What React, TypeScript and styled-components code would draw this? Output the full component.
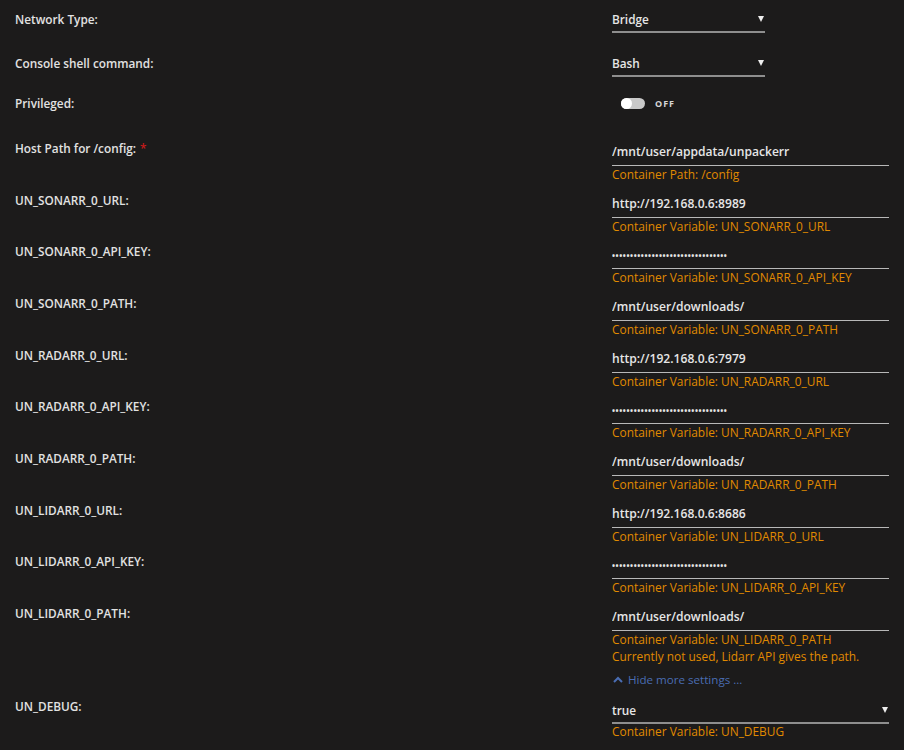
import React from "react";
import styled, { createGlobalStyle } from "styled-components";

const Global = createGlobalStyle`
  html, body {
    margin: 0;
    padding: 0;
    background: #1c1b1b;
  }
  body {
    font-family: "Open Sans", "Noto Sans", sans-serif;
    font-size: 11px;
    color: #e4e4e4;
  }
`;

const Form = styled.div`
  width: 904px;
  height: 750px;
  box-sizing: border-box;
  padding: 6px 15px 0 15px;
  background: #1c1b1b;
  overflow: hidden;
`;

const Row = styled.div<{ $gap: number }>`
  display: grid;
  grid-template-columns: 597px 277px;
  margin-bottom: ${(p) => p.$gap}px;
`;

const Label = styled.div<{ $shift?: number }>`
  font-size: 11.8px;
  font-weight: 600;
  color: #e2e2e2;
  line-height: 14px;
  padding-top: ${(p) => p.$shift ?? 6}px;
  white-space: nowrap;
`;

const Required = styled.span`
  color: #c51a1a;
  margin-left: 4px;
`;

const Field = styled.div`
  display: flex;
  flex-direction: column;
`;

const Select = styled.div<{ $wide?: boolean }>`
  position: relative;
  width: ${(p) => (p.$wide ? "277px" : "153px")};
  height: 25px;
  box-sizing: content-box;
  border-bottom: 2px solid #8e8e8e;
  line-height: 26px;
  font-size: 11.8px;
  font-weight: 600;
  color: #e6e6e6;
`;

const Caret = styled.span`
  position: absolute;
  right: 1px;
  top: 10px;
  width: 0;
  height: 0;
  border-left: 3px solid transparent;
  border-right: 3px solid transparent;
  border-top: 6px solid #eeeeee;
`;

const Input = styled.div`
  width: 277px;
  height: 26px;
  box-sizing: content-box;
  border-bottom: 1px solid #b8b8b8;
  line-height: 26px;
  font-size: 12.1px;
  font-weight: 600;
  color: #e6e6e6;
  white-space: nowrap;
  overflow: hidden;
`;

const Dots = styled.span`
  font-weight: 700;
  letter-spacing: 0.6px;
  font-size: 8px;
  color: #e6e6e6;
`;

const Hint = styled.div<{ $tight?: boolean }>`
  color: #e08a00;
  font-size: 11.9px;
  line-height: ${(p) => (p.$tight ? 14 : 17)}px;
  white-space: nowrap;
`;

const ToggleWrap = styled.div`
  display: flex;
  align-items: center;
  gap: 10px;
  height: 18px;
  padding-left: 9px;
`;

const Track = styled.span`
  position: relative;
  width: 24px;
  height: 11px;
  border-radius: 6px;
  background: #c9c9c9;
`;

const Knob = styled.span`
  position: absolute;
  left: 0;
  top: 0;
  width: 11px;
  height: 11px;
  border-radius: 50%;
  background: #ffffff;
`;

const ToggleText = styled.span`
  font-size: 9px;
  font-weight: 700;
  letter-spacing: 1px;
  color: #d6d6d6;
`;

const MoreLink = styled.div`
  display: flex;
  align-items: center;
  gap: 5px;
  margin-left: 598px;
  margin-top: 8px;
  margin-bottom: 10px;
  height: 14px;
  font-size: 11.6px;
  color: #4a6db3;
  font-weight: 400;
`;

type Variable = {
  name: string;
  value: string;
  secret?: boolean;
  note?: string;
};

const vars: Variable[] = [
  { name: "UN_SONARR_0_URL", value: "http://192.168.0.6:8989" },
  { name: "UN_SONARR_0_API_KEY", value: "", secret: true },
  { name: "UN_SONARR_0_PATH", value: "/mnt/user/downloads/" },
  { name: "UN_RADARR_0_URL", value: "http://192.168.0.6:7979" },
  { name: "UN_RADARR_0_API_KEY", value: "", secret: true },
  { name: "UN_RADARR_0_PATH", value: "/mnt/user/downloads/" },
  { name: "UN_LIDARR_0_URL", value: "http://192.168.0.6:8686" },
  { name: "UN_LIDARR_0_API_KEY", value: "", secret: true },
  {
    name: "UN_LIDARR_0_PATH",
    value: "/mnt/user/downloads/",
    note: "Currently not used, Lidarr API gives the path.",
  },
];

const mask = "•".repeat(32);

export default function App() {
  return (
    <>
      <Global />
      <Form>
        <Row $gap={17}>
          <Label $shift={6}>Network Type:</Label>
          <Select>
            Bridge
            <Caret />
          </Select>
        </Row>
        <Row $gap={17}>
          <Label $shift={6}>Console shell command:</Label>
          <Select>
            Bash
            <Caret />
          </Select>
        </Row>
        <Row $gap={27}>
          <Label $shift={2}>Privileged:</Label>
          <ToggleWrap>
            <Track>
              <Knob />
            </Track>
            <ToggleText>OFF</ToggleText>
          </ToggleWrap>
        </Row>
        <Row $gap={7.67}>
          <Label $shift={2}>
            Host Path for /config:<Required>*</Required>
          </Label>
          <Field>
            <Input>/mnt/user/appdata/unpackerr</Input>
            <Hint>Container Path: /config</Hint>
          </Field>
        </Row>
        {vars.map((v) => (
          <Row key={v.name} $gap={v.note ? 0 : 7.67}>
            <Label $shift={2}>{v.name}:</Label>
            <Field>
              <Input>{v.secret ? <Dots>{mask}</Dots> : v.value}</Input>
              <Hint>Container Variable: {v.name}</Hint>
              {v.note && <Hint>{v.note}</Hint>}
            </Field>
          </Row>
        ))}
        <MoreLink>
          <svg width="10" height="7" viewBox="0 0 10 7">
            <path
              d="M1 6 L5 2 L9 6"
              fill="none"
              stroke="#4a6db3"
              strokeWidth="2"
            />
          </svg>
          Hide more settings ...
        </MoreLink>
        <Row $gap={0}>
          <Label $shift={2}>UN_DEBUG:</Label>
          <Field>
            <Select $wide>
              true
              <Caret />
            </Select>
            <Hint $tight>Container Variable: UN_DEBUG</Hint>
          </Field>
        </Row>
      </Form>
    </>
  );
}
